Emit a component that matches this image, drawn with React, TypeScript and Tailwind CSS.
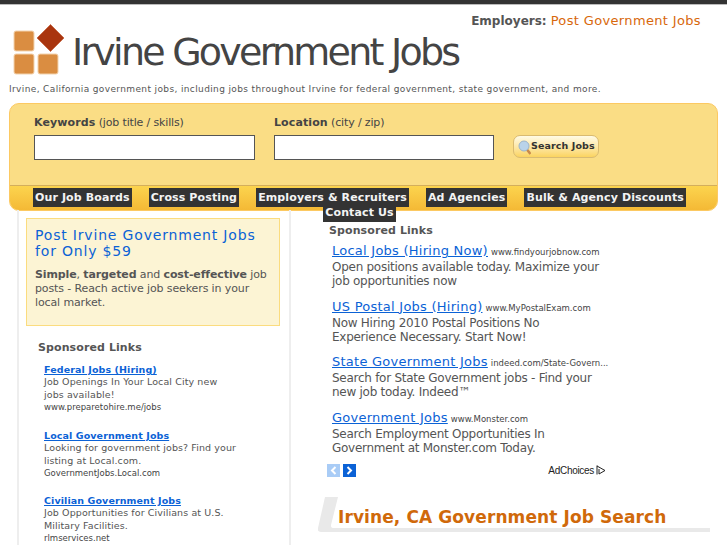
const dejavu = "font-['DejaVu_Sans',sans-serif]";

const navItems = ["Our Job Boards", "Cross Posting", "Employers & Recruiters", "Ad Agencies", "Bulk & Agency Discounts", "Contact Us"];

const sideAds = [
  { title: "Federal Jobs (Hiring)", lines: ["Job Openings In Your Local City new", "jobs available!"], url: "www.preparetohire.me/jobs" },
  { title: "Local Government Jobs", lines: ["Looking for government jobs? Find your", "listing at Local.com."], url: "GovernmentJobs.Local.com" },
  { title: "Civilian Government Jobs", lines: ["Job Opportunities for Civilians at U.S.", "Military Facilities."], url: "rlmservices.net" },
];

const mainAds = [
  { title: "Local Jobs (Hiring Now)", url: "www.findyourjobnow.com", lines: ["Open positions available today. Maximize your", "job opportunities now"] },
  { title: "US Postal Jobs (Hiring)", url: "www.MyPostalExam.com", lines: ["Now Hiring 2010 Postal Positions No", "Experience Necessary. Start Now!"] },
  { title: "State Government Jobs", url: "indeed.com/State-Govern...", lines: ["Search for State Government jobs - Find your", "new job today. Indeed™"] },
  { title: "Government Jobs", url: "www.Monster.com", lines: ["Search Employment Opportunities In", "Government at Monster.com Today."] },
];

function Logo() {
  return (
    <svg width="52" height="52" viewBox="0 0 52 52" className="shrink-0">
      <rect x="1" y="7" width="20" height="20" rx="2" fill="#da8d41" stroke="#f3d3ae" />
      <rect x="1" y="30" width="20" height="20" rx="2" fill="#da8d41" stroke="#f3d3ae" />
      <rect x="25" y="30" width="20" height="20" rx="2" fill="#da8d41" stroke="#f3d3ae" />
      <path d="M37.5 0.5 L51 14 L37.5 27.5 L24 14 Z" fill="#a9350f" stroke="#c9704f" strokeLinejoin="round" />
    </svg>
  );
}

function SearchIcon() {
  return (
    <svg width="13" height="16" viewBox="0 0 13 16" className="shrink-0">
      <path d="M8.5 10 L12.5 15" stroke="#c98a4a" strokeWidth="2.5" />
      <circle cx="6" cy="7" r="5" fill="#b9d3ea" stroke="#9db4c8" />
    </svg>
  );
}

export default function App() {
  return (
    <div className={`w-[727px] h-[545px] overflow-hidden bg-white text-[#444] ${dejavu}`}>
      <div className="h-[5px] bg-[#333] border-b border-[#bbb]" />

      {/* Header */}
      <div className="relative h-[98px]">
        <div className="absolute right-[26px] top-[8px] leading-4 flex items-baseline">
          <b className="text-[12px] text-[#555]">Employers:</b>
          <span className="ml-[4px] text-[13px] tracking-[0.35px] text-[#d8680c]">Post Government Jobs</span>
        </div>
        <div className="flex pl-[13px] pt-[19px] items-start">
          <Logo />
          <h1 className="ml-[7px] mt-[2px] text-[38px] leading-[52px] font-normal tracking-[-2.75px] text-[#444] whitespace-nowrap">Irvine Government Jobs</h1>
        </div>
        <p className="pl-[9px] mt-[4px] text-[9px] leading-[14px] tracking-[0.37px] text-[#555] whitespace-nowrap">
          Irvine, California government jobs, including jobs throughout Irvine for federal government, state government, and more.
        </p>
      </div>

      {/* Search panel */}
      <div className="mx-[9px] w-[709px] h-[108px] rounded-[10px] border border-[#fcc962] bg-[#fadd85] overflow-hidden flex flex-col">
        <div className="flex-1 flex pl-[24px] pt-[12px]">
          <div className="w-[240px]">
            <div className="text-[11px] leading-[14px] tracking-[-0.15px] text-[#444] whitespace-nowrap"><b className="tracking-[0.1px]">Keywords</b> (job title / skills)</div>
            <div className="mt-[5px] w-[221px] h-[25px] bg-white border border-[#555]" />
          </div>
          <div className="w-[239px]">
            <div className="text-[11px] leading-[14px] tracking-[-0.15px] text-[#444] whitespace-nowrap"><b className="tracking-[0.1px]">Location</b> (city / zip)</div>
            <div className="mt-[5px] w-[220px] h-[25px] bg-white border border-[#555]" />
          </div>
          <div className="mt-[19px] w-[86px] h-[23px] rounded-[7px] border border-[#d9bb72] bg-gradient-to-b from-[#fffbe6] to-[#fbd45f] flex items-center pl-[4px] text-[9.5px] font-bold tracking-[0.1px] text-[#333] whitespace-nowrap">
            <SearchIcon />
            <span>Search Jobs</span>
          </div>
        </div>
        <div className="h-[25px] shrink-0 border-t border-[#d3ae5c] bg-gradient-to-b from-[#fcd44e] to-[#f4b935]" />
      </div>

      {/* Nav sits over the band and spills under it */}
      <div className="relative -mt-[21px] h-[30px] ml-[9px] w-[701px] text-[11px] leading-[15px] font-bold tracking-[0.12px] text-[#f3f3f3]">
        <div className="flex flex-wrap justify-center gap-x-[17px]">
          {navItems.map((item) => (
            <span key={item} className="bg-[#333] px-[2px] py-[2px] -my-[2px] whitespace-nowrap">{item}</span>
          ))}
        </div>
      </div>

      {/* Body */}
      <div className="-mt-[10px] flex">
        <div className="ml-[17px] w-[274px] shrink-0 border-x-2 border-[#eee] h-[340px] pl-[7px]">
          <div className="mt-[8px] w-[254px] h-[108px] bg-[#fcf4d4] border border-[#fbdc7f] pl-[8px] pt-[9px]">
            <div className="text-[14px] leading-[15.5px] tracking-[0.82px] text-[#0b62d6] whitespace-nowrap">Post Irvine Government Jobs<br />for Only $59</div>
            <p className="mt-[9px] text-[11px] leading-[14px] tracking-[-0.12px] text-[#555] whitespace-nowrap"><b>Simple</b>, <b>targeted</b> and <b>cost-effective</b> job<br />posts - Reach active job seekers in your<br />local market.</p>
          </div>
          <div className="ml-[12px] mt-[15px] text-[11px] leading-[14px] font-bold tracking-[0.1px] text-[#555]">Sponsored Links</div>
          <div className="ml-[18px] mt-[9px] flex flex-col gap-[16.5px]">
            {sideAds.map((ad) => (
              <div key={ad.title}>
                <div className="text-[9.5px] leading-[12px] font-bold tracking-[0.1px] text-[#0b62d6] underline whitespace-nowrap">{ad.title}</div>
                <div className="-mt-[1px] text-[9.5px] leading-[13px] tracking-[0.1px] text-[#555] whitespace-nowrap">{ad.lines[0]}<br />{ad.lines[1]}</div>
                <div className="text-[8.5px] leading-[12px] text-[#444]">{ad.url}</div>
              </div>
            ))}
          </div>
        </div>

        <div className="flex-1 pl-[38px]">
          <div className="mt-[14px] text-[11px] leading-[14px] font-bold tracking-[0.1px] text-[#555]">Sponsored Links</div>
          <div className="ml-[3px] mt-[4px] flex flex-col gap-[9.5px]">
            {mainAds.map((ad) => (
              <div key={ad.title}>
                <div className="leading-[15px] whitespace-nowrap">
                  <span className="text-[13px] tracking-[0.25px] text-[#0b62d6] underline">{ad.title}</span>
                  <span className="ml-[3px] text-[8.5px] text-[#444]">{ad.url}</span>
                </div>
                <div className="text-[12px] leading-[14px] tracking-[-0.27px] text-[#555] whitespace-nowrap">{ad.lines[0]}<br />{ad.lines[1]}</div>
              </div>
            ))}
          </div>
          <div className="mt-[9.5px] -ml-[2px] w-[279px] flex items-center">
            <span className="w-[13px] h-[13px] bg-[#a9ccf6] flex items-center justify-center">
              <svg width="7" height="9" viewBox="0 0 7 9"><path d="M5.5 1 L2 4.5 L5.5 8" fill="none" stroke="#fff" strokeWidth="2" /></svg>
            </span>
            <span className="ml-[3px] w-[13px] h-[13px] bg-[#0b62d6] flex items-center justify-center">
              <svg width="7" height="9" viewBox="0 0 7 9"><path d="M1.5 1 L5 4.5 L1.5 8" fill="none" stroke="#fff" strokeWidth="2" /></svg>
            </span>
            <span className="ml-auto text-[10px] leading-[13px] tracking-[-0.3px] text-[#222] font-['Liberation_Sans',sans-serif]">AdChoices</span>
            <svg width="10" height="11" viewBox="0 0 10 11" className="ml-[2px]"><path d="M1 0.5 L1 9.5 M1 1 L9 5.5 L3 9 L3 4" fill="none" stroke="#222" strokeWidth="1" /></svg>
          </div>
          <div className="relative -ml-[11px] mt-[20px] w-[392px] h-[35px]">
            <svg width="392" height="35" viewBox="0 0 392 35" className="absolute inset-0">
              <path d="M7 0 L20 0 L13 28 Q12.5 31 16 31 L392 31 L392 35 L3 35 Q-1 35 0 31 Z" fill="#e9e9e9" />
            </svg>
            <h2 className="relative pl-[20px] pt-[9px] text-[17px] leading-[22px] font-bold tracking-[0.1px] text-[#d0690a] whitespace-nowrap">Irvine, CA Government Job Search</h2>
          </div>
        </div>
      </div>
    </div>
  );
}
